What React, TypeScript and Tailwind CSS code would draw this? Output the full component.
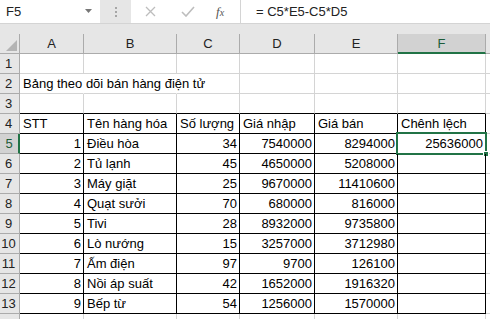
import React from "react";

const cols = ["A", "B", "C", "D", "E", "F"];

type Cell = { v: string; r?: boolean };

const data: Record<number, Cell[]> = {
  2: [{ v: "Bảng theo dõi bán hàng điện tử" }],
  4: [
    { v: "STT" },
    { v: "Tên hàng hóa" },
    { v: "Số lượng" },
    { v: "Giá nhập" },
    { v: "Giá bán" },
    { v: "Chênh lệch" },
  ],
};

const items: [string, string, string, string, string][] = [
  ["1", "Điều hòa", "34", "7540000", "8294000"],
  ["2", "Tủ lạnh", "45", "4650000", "5208000"],
  ["3", "Máy giặt", "25", "9670000", "11410600"],
  ["4", "Quạt sưởi", "70", "680000", "816000"],
  ["5", "Tivi", "28", "8932000", "9735800"],
  ["6", "Lò nướng", "15", "3257000", "3712980"],
  ["7", "Ấm điện", "97", "9700", "126100"],
  ["8", "Nồi áp suất", "42", "1652000", "1916320"],
  ["9", "Bếp từ", "54", "1256000", "1570000"],
];
items.forEach((it, i) => {
  const row = 5 + i;
  data[row] = [
    { v: it[0], r: true },
    { v: it[1] },
    { v: it[2], r: true },
    { v: it[3], r: true },
    { v: it[4], r: true },
    { v: i === 0 ? "25636000" : "", r: true },
  ];
});

const rows = Array.from({ length: 14 }, (_, i) => i + 1);

export default function App() {
  return (
    <div
      className="w-[490px] h-[319px] overflow-hidden bg-[#e6e6e6] text-[13px] text-black"
      style={{ fontFamily: '"Liberation Sans", Arial, sans-serif' }}
    >
      {/* formula bar */}
      <div className="flex h-[24px] border-b border-[#d4d4d4]">
        <div className="w-[100px] bg-white flex items-center pl-[6px] pr-[8px] text-[#222]">
          <span className="flex-1">F5</span>
          <svg width="7" height="4" viewBox="0 0 7 4" className="mb-[2px]">
            <path d="M0 0 H7 L3.5 4 Z" fill="#777" />
          </svg>
        </div>
        <div className="w-[31px] flex items-center justify-center">
          <div className="flex flex-col gap-[2px]">
            <div className="w-[2px] h-[2px] bg-[#a6a6a6]" />
            <div className="w-[2px] h-[2px] bg-[#a6a6a6]" />
            <div className="w-[2px] h-[2px] bg-[#a6a6a6]" />
          </div>
        </div>
        <div className="w-[110px] bg-white flex items-center border-r border-[#d4d4d4]">
          <svg width="11" height="11" viewBox="0 0 11 11" className="ml-[14px]">
            <path d="M1 1 L10 10 M10 1 L1 10" stroke="#bdbdbd" strokeWidth="1.3" />
          </svg>
          <svg width="14" height="11" viewBox="0 0 14 11" className="ml-[25px]">
            <path d="M1 6 L5 10 L13 1" stroke="#bdbdbd" strokeWidth="1.6" fill="none" />
          </svg>
          <span
            className="ml-[21px] italic text-[#555] text-[13px] leading-none"
            style={{ fontFamily: '"Liberation Serif", serif' }}
          >
            f<span className="text-[10px]">x</span>
          </span>
        </div>
        <div className="flex-1 bg-white flex items-center pl-[15px] text-[#222]">
          = C5*E5-C5*D5
        </div>
      </div>
      <div className="h-[10px]" />
      {/* grid */}
      <div className="grid grid-cols-[20px_64px_93px_63px_75px_83px_88px_1fr] bg-white">
        {/* header row */}
        <div className="h-[20px] bg-[#e6e6e6] border-r border-b border-[#ababab] relative flex items-end justify-end p-[2px]">
          <svg width="11" height="11" viewBox="0 0 11 11">
            <path d="M11 0 V11 H0 Z" fill="#b4b4b4" />
          </svg>
        </div>
        {cols.map((c) =>
          c === "F" ? (
            <div
              key={c}
              className="h-[20px] bg-[#d2d2d2] border-r border-[#ababab] border-b-2 border-b-[#217346] flex items-center justify-center text-[#1d5c39] pt-[1px]"
            >
              {c}
            </div>
          ) : (
            <div
              key={c}
              className="h-[20px] bg-[#e6e6e6] border-r border-b border-[#ababab] flex items-center justify-center text-[#222] pt-[1px]"
            >
              {c}
            </div>
          )
        )}
        <div className="h-[20px] bg-[#e6e6e6] border-b border-[#ababab]" />

        {rows.map((r) => {
          const inTable = r >= 4 && r <= 13;
          const rowCells = data[r] || [];
          return (
            <React.Fragment key={r}>
              <div
                className={
                  r === 5
                    ? "h-[20px] bg-[#d2d2d2] border-b border-[#ababab] border-r-2 border-r-[#217346] flex items-end justify-center pb-[3px] text-[#1d5c39] leading-none"
                    : "h-[20px] bg-[#e6e6e6] border-r border-b border-[#ababab] flex items-end justify-center pb-[3px] pr-[2px] text-[#222] leading-none"
                }
              >
                {r <= 13 ? r : ""}
              </div>
              {cols.map((c, ci) => {
                const cell = rowCells[ci];
                const bb = inTable || r === 3 ? "border-b-black" : "border-b-[#d4d4d4]";
                const spill = r === 2 && ci < 2;
                const br = inTable
                  ? "border-r-black"
                  : spill
                  ? "border-r-transparent"
                  : "border-r-[#d4d4d4]";
                const sel = r === 5 && c === "F";
                return (
                  <div
                    key={c}
                    className={`h-[20px] border-r border-b ${bb} ${br} relative flex items-end pb-[3px] leading-none whitespace-nowrap overflow-visible ${
                      cell?.r ? "justify-end pr-[2px]" : "justify-start pl-[3px]"
                    } ${r === 2 && ci === 0 ? "z-10" : ""}`}
                  >
                    {cell?.v ?? ""}
                    {sel && (
                      <>
                        <div className="absolute left-[-2px] top-[-2px] right-[-2px] bottom-[-2px] border-2 border-[#217346] pointer-events-none" />
                        <div className="absolute right-[-4px] bottom-[-4px] w-[6px] h-[6px] bg-[#217346] border border-white" />
                      </>
                    )}
                  </div>
                );
              })}
              <div className="h-[20px] border-b border-[#d4d4d4]" />
            </React.Fragment>
          );
        })}
      </div>
    </div>
  );
}
